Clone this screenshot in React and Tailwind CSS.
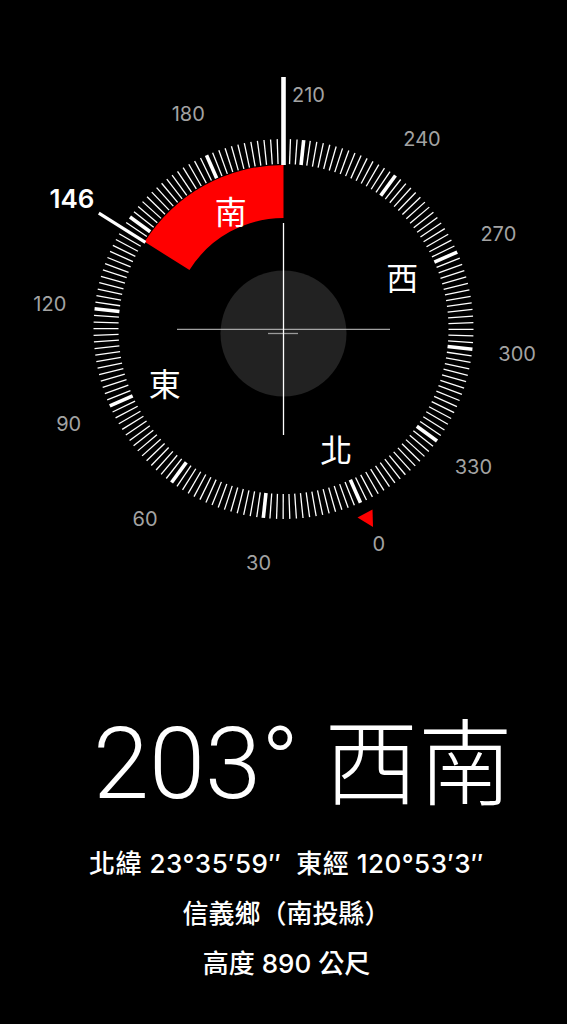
import React from "react";

const CX = 283.5;
const CY = 329;
const DIAL = 203.9;

function pt(bearing, r) {
  const a = ((bearing - DIAL) * Math.PI) / 180;
  return [CX + r * Math.sin(a), CY - r * Math.cos(a)];
}

function Compass() {
  const ticks = [];
  for (let b = 0; b < 360; b += 2) {
    const major = b % 30 === 0;
    const [x1, y1] = pt(b, 165);
    const [x2, y2] = pt(b, 190);
    ticks.push(
      <line
        key={b}
        x1={x1}
        y1={y1}
        x2={x2}
        y2={y2}
        stroke="#ffffff"
        strokeWidth={major ? 3.6 : 1.3}
      />
    );
  }
  const labels = [];
  for (let b = 0; b < 360; b += 30) {
    if (b === 150) continue;
    const [x, y] = pt(b, 235);
    labels.push(
      <text
        key={b}
        x={x}
        y={y}
        textAnchor="middle"
        dominantBaseline="central"
        fill="#a3a3a3"
        fontSize="20"
        fontFamily="Inter, 'Liberation Sans', sans-serif"
      >
        {b}
      </text>
    );
  }
  const cardinals = [
    [0, "北"],
    [90, "東"],
    [180, "南"],
    [270, "西"],
  ].map(([b, t]) => {
    const [x, y] = pt(b, 130);
    return (
      <text
        key={t}
        x={x}
        y={y}
        textAnchor="middle"
        dominantBaseline="central"
        fill="#ffffff"
        fontSize="32"
        fontFamily="'Noto Sans CJK TC', sans-serif"
      >
        {t}
      </text>
    );
  });

  const [ao1x, ao1y] = pt(146, 164);
  const [ao2x, ao2y] = pt(DIAL, 164);
  const [ai2x, ai2y] = pt(DIAL, 111);
  const [ai1x, ai1y] = pt(146, 111);
  const arc = `M ${ao1x} ${ao1y} A 164 164 0 0 1 ${ao2x} ${ao2y} L ${ai2x} ${ai2y} A 111 111 0 0 0 ${ai1x} ${ai1y} Z`;

  const [m1x, m1y] = pt(146, 163);
  const [m2x, m2y] = pt(146, 218);

  return (
    <svg width="567" height="600" viewBox="0 0 567 600" className="block shrink-0">
      <circle cx={CX} cy={333.5} r="63" fill="#222222" />
      <path d={arc} fill="#ff0000" />
      {ticks}
      {labels}
      {cardinals}
      <line x1={m1x} y1={m1y} x2={m2x} y2={m2y} stroke="#ffffff" strokeWidth="3.2" />
      <text
        x="72"
        y="198"
        textAnchor="middle"
        dominantBaseline="central"
        fill="#ffffff"
        fontSize="26"
        fontWeight="600"
        fontFamily="Inter, 'Liberation Sans', sans-serif"
      >
        146
      </text>
      <line x1={CX} y1="77" x2={CX} y2="165" stroke="#ffffff" strokeWidth="4.6" />
      <line x1="177" y1="329.3" x2="390" y2="329.3" stroke="#c8c8c8" strokeWidth="1" />
      <line x1="268" y1="333.5" x2="298" y2="333.5" stroke="#9a9a9a" strokeWidth="1.3" />
      <line x1={CX} y1="223" x2={CX} y2="435" stroke="#ffffff" strokeWidth="1.3" />
      <polygon points="357.5,517.5 372.5,509.5 373,527" fill="#ff0000" />
    </svg>
  );
}

export default function App() {
  return (
    <div className="w-[567px] h-[1024px] bg-black overflow-hidden flex flex-col text-white font-['Inter','Noto_Sans_CJK_TC',sans-serif]">
      <Compass />
      <div className="mt-[110px] pl-[93px] flex items-baseline leading-none whitespace-nowrap">
        <span className="text-[101px] font-light font-['Roboto',sans-serif]">203°</span>
        <span className="ml-[25px] text-[94px] font-extralight font-['Noto_Sans_CJK_TC',sans-serif]">西南</span>
      </div>
      <div className="mt-[25px] pl-[6px] flex flex-col items-center text-[26px] leading-[50px] font-medium whitespace-nowrap">
        <div className="tracking-[0.5px]">
          北緯 23°35′59″&nbsp;&nbsp;東經 120°53′3″
        </div>
        <div>信義鄉（南投縣）</div>
        <div>高度 890 公尺</div>
      </div>
    </div>
  );
}
